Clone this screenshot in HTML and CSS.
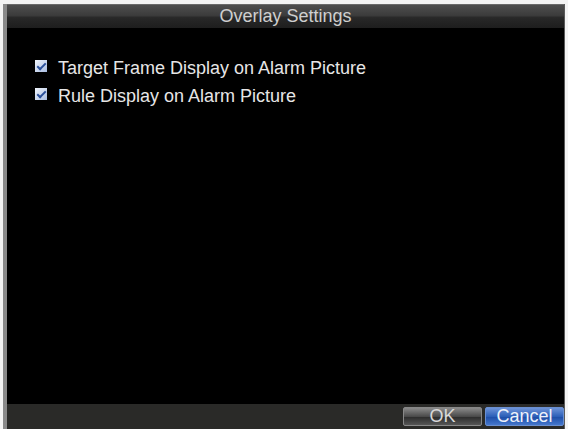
FILE: index.html
```html
<!DOCTYPE html>
<html>
  <head>
    <title>Overlay Settings</title>
    <link rel="stylesheet" href="styles.css">
  </head>
  <body>
    <div class="dialog">
      <div class="title-bar">Overlay Settings</div>
      <div class="content">
        <label class="option">
          <span class="check"></span>
          Target Frame Display on Alarm Picture
        </label>
        <label class="option">
          <span class="check"></span>
          Rule Display on Alarm Picture
        </label>
      </div>
      <div class="footer">
        <button class="btn ok">OK</button>
        <button class="btn cancel">Cancel</button>
      </div>
    </div>
  </body>
</html>
```

FILE: styles.css
```css
body {
  margin: 0;
  padding: 4px 3px 0 3px;
  background-color: #f4f4f4;
  font-family: "Liberation Sans", Arial, sans-serif;
  height: 429px;
  box-sizing: border-box;
}
.dialog {
  display: flex;
  flex-direction: column;
  height: 100%;
  background-color: #000;
  border-left: 4px solid #8a8a8a;
  border-right: 1px solid #5a5a5a;
  box-sizing: border-box;
}
.title-bar {
  height: 23px;
  line-height: 23px;
  text-align: center;
  font-size: 18px;
  color: #cfcfcf;
  background: linear-gradient(#4e4e4e, #3c3c3c 45%, #282828 55%, #1e1e1e);
  border-top: 1px solid #6a6a6a;
}
.content {
  flex: 1;
  padding: 31px 0 0 28px;
  display: flex;
  flex-direction: column;
  gap: 10px;
}
.option {
  display: flex;
  align-items: flex-start;
  gap: 11px;
  font-size: 18px;
  line-height: 18px;
  color: #e6e6e6;
  height: 18px;
}
.check {
  width: 12px;
  height: 12px;
  margin-top: 1px;
  background: linear-gradient(135deg, #f0f4fb, #a9bde2);
  position: relative;
}
.check::after {
  content: "";
  position: absolute;
  left: 2px;
  top: 3px;
  width: 7px;
  height: 3px;
  border-left: 2px solid #2a4f9a;
  border-bottom: 2px solid #2a4f9a;
  transform: rotate(-45deg);
}
.footer {
  height: 25px;
  background-color: #2a2a28;
  display: flex;
  justify-content: flex-end;
  align-items: center;
  gap: 3px;
  padding-right: 0;
}
.btn {
  width: 79px;
  height: 19px;
  padding: 0;
  font-family: "Liberation Sans", Arial, sans-serif;
  font-size: 18px;
  line-height: 17px;
  color: #d8d8d8;
  border: 1px solid #888;
  border-radius: 2px;
}
.btn.ok {
  background: linear-gradient(#8a8a8a, #4a4a4a 50%, #2e2e2e 55%, #555);
}
.btn.cancel {
  color: #eef2fa;
  border-color: #6a8fd0;
  background: linear-gradient(#6d93d8, #2c5fb8 50%, #1f4fa8 55%, #4577cc);
}
```
